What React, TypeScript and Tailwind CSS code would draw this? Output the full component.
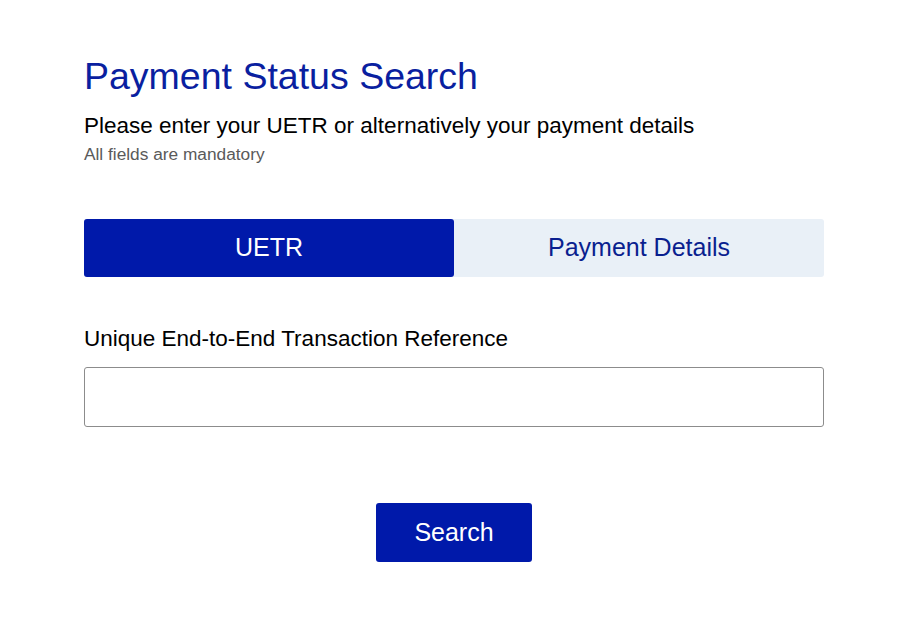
import { useState } from 'react';

export default function App() {
  const [tab, setTab] = useState<'uetr' | 'details'>('uetr');
  const [uetr, setUetr] = useState('');

  return (
    <main className="min-h-screen bg-white font-['Liberation_Sans',Arial,sans-serif]">
      <div className="w-[740px] ml-[84px] pt-[55px]">
        <h1 className="text-[37.5px] leading-[42px] text-[#0a1fa0]">Payment Status Search</h1>
        <p className="mt-[16px] text-[22.5px] leading-[26px] text-black">
          Please enter your UETR or alternatively your payment details
        </p>
        <p className="mt-[5px] text-[17.3px] leading-[20px] text-[#5a5a5a]">All fields are mandatory</p>

        <div className="mt-[55px] flex h-[58px] rounded-[3px] bg-[#e9f0f7]">
          <button
            className={`flex-1 rounded-[3px] text-[25px] ${
              tab === 'uetr' ? 'bg-[#0019aa] text-white' : 'text-[#0a1f8f]'
            }`}
            onClick={() => setTab('uetr')}
          >
            UETR
          </button>
          <button
            className={`flex-1 rounded-[3px] text-[25px] ${
              tab === 'details' ? 'bg-[#0019aa] text-white' : 'text-[#0a1f8f]'
            }`}
            onClick={() => setTab('details')}
          >
            Payment Details
          </button>
        </div>

        <label className="block mt-[49px] text-[22.5px] leading-[26px] text-black">
          Unique End-to-End Transaction Reference
        </label>
        <input
          value={uetr}
          onChange={(event) => setUetr(event.target.value)}
          className="mt-[15px] block w-full h-[60px] rounded-[3px] border border-[#8c8c8c] px-3 text-[20px] outline-none"
        />

        <div className="mt-[76px] flex justify-center">
          <button className="w-[156px] h-[59px] rounded-[3px] bg-[#0019aa] text-white text-[25px]">Search</button>
        </div>
      </div>
    </main>
  );
}
